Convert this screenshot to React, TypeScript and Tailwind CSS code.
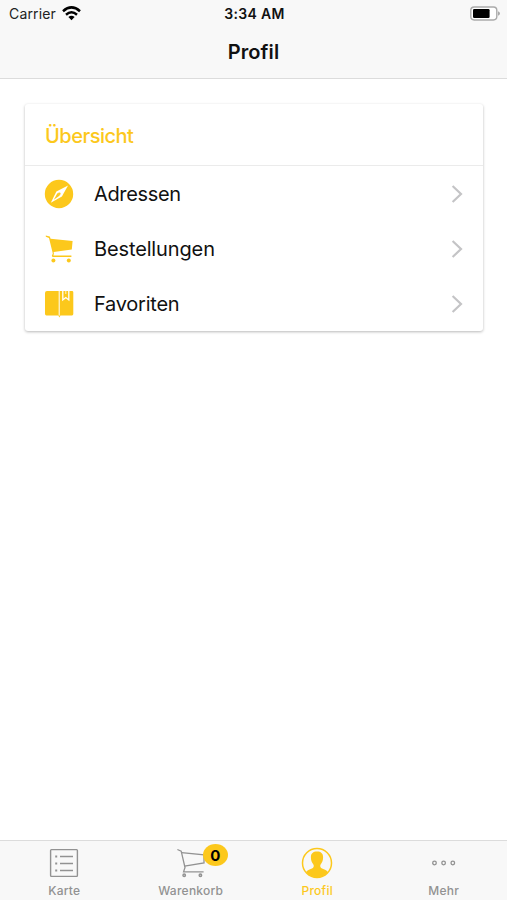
import { clsx } from 'clsx'
import type { ReactNode } from 'react'

function CompassIcon() {
  return (
    <svg width="30" height="30" viewBox="0 0 30 30">
      <circle cx="15" cy="15" r="14.2" fill="#fcc81c" />
      <path d="M24 6.4L17.9 17.6L6.8 23.8L12.4 12.4Z" fill="#fff" />
      <path d="M13.5 14L15.8 16.4L9.8 20.8Z" fill="#fcc81c" />
      <circle cx="15.3" cy="14.7" r="1.3" fill="#fcc81c" />
    </svg>
  )
}

function CartIcon() {
  return (
    <svg width="30" height="30" viewBox="0 0 30 30" fill="#fcc81c">
      <path d="M1.8 1.4L5.8 2.6L6.6 4.8L28.6 7L27.8 15.4L9.6 18L9.9 19.4L9.4 21.4H27.4V23H8.6L7.8 22L8.8 19.4L5 4L1.8 2.8Z" />
      <circle cx="9.4" cy="26.4" r="2" />
      <circle cx="24.8" cy="26.4" r="2" />
    </svg>
  )
}

function BookIcon() {
  return (
    <svg width="30" height="30" viewBox="0 0 30 30">
      <path
        d="M3 2H28Q29.3 2 29.3 3.2V25Q29.3 26.4 28 26.4H16.4L15.4 28.6L14.3 26.4H2.4Q1 26.4 1 24.8V4Q1 2 3 2Z"
        fill="#fcc81c"
      />
      <path d="M15.2 1.8V26.6" stroke="#fff" strokeWidth="1" />
      <path d="M18.8 1.8V11L21.8 8.6L24.8 11V1.8" fill="none" stroke="#fff" strokeWidth="1.3" />
      <path d="M21.8 1.8V5" stroke="#fff" strokeWidth="0.8" />
    </svg>
  )
}

function ChevronIcon() {
  return (
    <svg width="12" height="18" viewBox="0 0 12 18" fill="none" stroke="#c4c4c6" strokeWidth="2.2">
      <path d="M1.6 1L10 9L1.6 17" />
    </svg>
  )
}

function ListTabIcon() {
  return (
    <svg width="30" height="30" viewBox="0 0 30 30" fill="none" stroke="#929292" strokeWidth="1.4">
      <rect x="1.6" y="1.6" width="26.8" height="26.8" rx="0.8" />
      <path d="M11 8.5H24M11 15.5H24M11 22.5H24" />
      <path d="M6.2 8.5H8.2M6.2 15.5H8.2M6.2 22.5H8.2" strokeWidth="1.9" />
    </svg>
  )
}

function CartTabIcon() {
  return (
    <svg width="30" height="30" viewBox="0 0 30 30" fill="none" stroke="#929292" strokeWidth="1.3">
      <path d="M1.4 1.5L5.2 3.1L9 19.5L7.6 23.8H27.6" />
      <path d="M5.6 4.7L28 6.8V15L8.5 18.1" />
      <circle cx="8.2" cy="27.3" r="1.3" fill="#929292" fillOpacity="0.5" />
      <circle cx="24.4" cy="27.3" r="1.3" fill="#929292" fillOpacity="0.5" />
    </svg>
  )
}

function ProfileTabIcon() {
  return (
    <svg width="32" height="32" viewBox="0 0 32 32">
      <circle cx="16" cy="16" r="14.5" fill="none" stroke="#fcc81c" strokeWidth="1.5" />
      <path
        d="M16 4.6C12.1 4.6 9.8 6.7 9.9 10.2C9.9 13.4 10.8 15.2 12.2 17.3C12.9 18.3 13.1 20.1 11.9 20.9C10.3 22 6.7 22.5 5 25A14 14 0 0 0 27 25C25.3 22.5 21.7 22 20.1 20.9C18.9 20.1 19.1 18.3 19.8 17.3C21.2 15.2 22.1 13.4 22.1 10.2C22.2 6.7 19.9 4.6 16 4.6Z"
        fill="#fcc81c"
      />
    </svg>
  )
}

function MoreTabIcon() {
  return (
    <svg width="30" height="30" viewBox="0 0 30 30" fill="none" stroke="#929292" strokeWidth="1.3">
      <circle cx="5.5" cy="15" r="1.8" />
      <circle cx="14.6" cy="15" r="1.8" />
      <circle cx="23.8" cy="15" r="1.8" />
    </svg>
  )
}

function StatusBar() {
  return (
    <div className="grid h-7 grid-cols-3 items-center pl-[9px] pr-[7px] leading-none">
      <div className="flex items-center gap-1.5 text-[#222]">
        <span className="text-[14px] tracking-[0.15px]">Carrier</span>
        <svg className="mb-0.5" width="19" height="15" viewBox="0 0 19 15" fill="none" stroke="#000" strokeWidth="2.5">
          <path d="M1 5.2Q9.5 -2.4 18 5.2" />
          <path d="M4 8.7Q9.5 3.9 15 8.7" />
          <path d="M9.5 14.2L6.4 11.1Q9.5 8.4 12.6 11.1Z" fill="#000" stroke="none" />
        </svg>
      </div>
      <span className="text-center text-[14px] font-semibold tracking-[0.35px] text-[#111]">3:34 AM</span>
      <svg className="mb-0.5 justify-self-end" width="30" height="15" viewBox="0 0 30 15">
        <rect x="0.8" y="1" width="26" height="13" rx="3.4" fill="#fff" stroke="#aaa" strokeWidth="1.4" />
        <rect x="3" y="3" width="16.6" height="9" rx="1.2" fill="#000" />
        <path d="M28 5.2Q30 6 30 7.5Q30 9 28 9.8Z" fill="#aaa" />
      </svg>
    </div>
  )
}

const rows = [
  { label: 'Adressen', icon: <CompassIcon />, spacing: 'tracking-[-0.35px]' },
  { label: 'Bestellungen', icon: <CartIcon />, spacing: 'tracking-[-0.13px]' },
  { label: 'Favoriten', icon: <BookIcon />, spacing: 'tracking-[-0.25px]' },
]

type TabProps = { label: string; icon: ReactNode; active?: boolean; badge?: number }

const tabs: TabProps[] = [
  { label: 'Karte', icon: <ListTabIcon /> },
  { label: 'Warenkorb', icon: <CartTabIcon />, badge: 0 },
  { label: 'Profil', icon: <ProfileTabIcon />, active: true },
  { label: 'Mehr', icon: <MoreTabIcon /> },
]

function Tab({ label, icon, active, badge }: TabProps) {
  return (
    <a
      href="#"
      className={clsx(
        'flex flex-1 flex-col items-center pt-[6px] text-[12px] font-medium leading-none tracking-[0.25px]',
        active ? 'text-[#fcc81c]' : 'text-[#929292]'
      )}
    >
      <span className="relative flex h-8 items-center">
        {icon}
        {badge !== undefined && (
          <span className="absolute -top-[3px] left-[27px] flex h-[22px] w-[25px] items-center justify-center rounded-[50%] bg-[#fcc81c] text-[15px] font-bold tracking-normal text-black">
            {badge}
          </span>
        )}
      </span>
      <span className="mt-[6px]">{label}</span>
    </a>
  )
}

export default function App() {
  return (
    <div className="flex h-screen flex-col bg-white font-['Inter',sans-serif]">
      <header className="h-[79px] border-b border-[#dcdcdc] bg-[#f8f8f8]">
        <StatusBar />
        <h1 className="pt-2.5 text-center text-[20px] font-semibold leading-7 tracking-[0.1px] text-[#111]">Profil</h1>
      </header>

      <main className="flex-1 pl-[25px] pr-6 pt-[25px]">
        <section className="rounded-[3px] bg-white shadow-[0_1px_3px_rgba(0,0,0,0.28)]">
          <h2 className="flex h-[62px] items-center border-b border-[#ebebeb] px-5 pt-0.5 text-[20px] font-medium tracking-[-0.5px] text-[#fcc81c]">
            Übersicht
          </h2>
          <ul>
            {rows.map(({ label, icon, spacing }) => (
              <li key={label} className="flex h-[55px] items-center pl-[19px] pr-5">
                {icon}
                <span className={clsx('ml-5 flex-1 text-[20px] text-[#111]', spacing)}>{label}</span>
                <ChevronIcon />
              </li>
            ))}
          </ul>
        </section>
      </main>

      <nav className="flex h-[60px] border-t border-[#dcdcdc] bg-[#f8f8f8] pl-px">
        {tabs.map((tab) => (
          <Tab key={tab.label} {...tab} />
        ))}
      </nav>
    </div>
  )
}
